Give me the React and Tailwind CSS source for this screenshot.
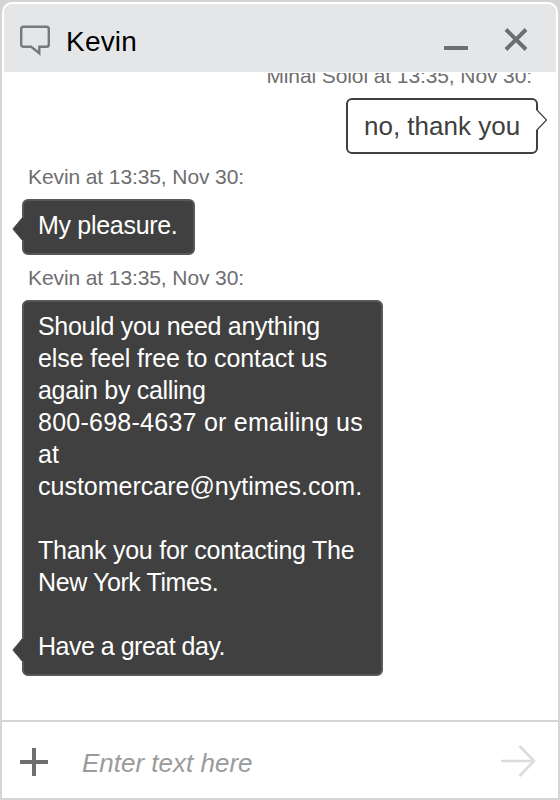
import { useState } from "react";

const messages = [
  {
    id: 1,
    from: "me",
    name: "Mihai Soloi",
    lines: [{ text: "no, thank you", tracking: "" }],
  },
  {
    id: 2,
    from: "agent",
    name: "Kevin",
    lines: [{ text: "My pleasure.", tracking: "tracking-[-0.3px]" }],
  },
  {
    id: 3,
    from: "agent",
    name: "Kevin",
    lines: [
      { text: "Should you need anything", tracking: "tracking-[-0.3px]" },
      { text: "else feel free to contact us", tracking: "tracking-[-0.1px]" },
      { text: "again by calling", tracking: "tracking-[-0.3px]" },
      { text: "800-698-4637 or emailing us", tracking: "tracking-[0.25px]" },
      { text: "at", tracking: "" },
      { text: "customercare@nytimes.com.", tracking: "tracking-[0px]" },
      { text: "", tracking: "" },
      { text: "Thank you for contacting The", tracking: "tracking-[-0.25px]" },
      { text: "New York Times.", tracking: "tracking-[-0.4px]" },
      { text: "", tracking: "" },
      { text: "Have a great day.", tracking: "tracking-[-0.5px]" },
    ],
  },
];

function Message({ message }) {
  const mine = message.from === "me";

  return (
    <div className={`flex flex-col ${mine ? "items-end pr-5" : "items-start pl-5"}`}>
      <div
        className={`h-[45px] whitespace-nowrap text-[21px] leading-[45px] tracking-[-0.1px] text-[#6e6e70] ${mine ? "pr-1.5" : "pl-1.5"}`}
      >
        {message.name} at 13:35, Nov 30:
      </div>
      <div
        className={`relative rounded-md border-2 leading-8 ${
          mine
            ? "border-[#404040] bg-white px-4 py-2.5 text-[26px] text-[#404040]"
            : "border-[#585858] bg-[#404040] px-3.5 pb-3 pt-2 text-[25px] text-white"
        } ${message.id === 3 ? "w-[361px]" : message.id === 2 ? "w-[173px]" : "w-48"}`}
      >
        {message.lines.map((line, i) => (
          <div key={i} className={`h-8 whitespace-nowrap ${line.tracking}`}>
            {line.text}
          </div>
        ))}
        {mine ? (
          <svg className="absolute -right-[12px] bottom-[20px]" width="14" height="24" viewBox="0 0 14 24">
            <path d="M1 2H4L13 12L4 22H1Z" fill="#fff" />
            <path d="M2.5 1.5L12.5 12L2.5 22.5" fill="none" stroke="#404040" strokeWidth="1.2" />
          </svg>
        ) : (
          <svg className="absolute -left-[12px] bottom-[13px]" width="12" height="22" viewBox="0 0 12 22">
            <path d="M12 0H10L0.5 11L10 22H12Z" fill="#404040" />
            <path d="M10 0L1 11L10 22" fill="none" stroke="#585858" strokeWidth="1" />
          </svg>
        )}
      </div>
    </div>
  );
}

export default function App() {
  const [text, setText] = useState("");

  return (
    <div className="h-[800px] w-[560px] bg-[#d4d4d4] font-['Liberation_Sans',Arial,sans-serif]">
      <div className="flex h-full flex-col overflow-hidden rounded-t-xl border-2 border-[#d4d4d4] bg-white">
        <header className="mx-0.5 mt-0.5 flex h-[68px] shrink-0 items-center rounded-t-lg bg-[#e5e6e8] pl-4 pr-7">
          <svg width="30" height="32" viewBox="0 0 30 32" fill="none" stroke="#77787a" strokeWidth="2.4" className="mt-1.5">
            <path d="M3.5 1.7H26.5Q28.8 1.7 28.8 4V19.5Q28.8 21.8 26.5 21.8H19.3V28.3L11.2 21.8H3.5Q1.2 21.8 1.2 19.5V4Q1.2 1.7 3.5 1.7Z" />
          </svg>
          <h1 className="ml-4 mt-2 text-[28px] leading-8 tracking-[0.2px] text-black">Kevin</h1>
          <div className="ml-auto flex items-center gap-9">
            <button type="button" aria-label="Minimize">
              <svg width="24" height="24" viewBox="0 0 24 24" className="mt-0.5">
                <path d="M0 21H24" stroke="#6d6e70" strokeWidth="4" />
              </svg>
            </button>
            <button type="button" aria-label="Close">
              <svg width="24" height="24" viewBox="0 0 24 24" className="mt-0.5">
                <path d="M2 2.5L22 22.5M22 2.5L2 22.5" stroke="#6d6e70" strokeWidth="4" />
              </svg>
            </button>
          </div>
        </header>

        <main className="mt-px min-h-0 flex-1 overflow-hidden">
          <div className="-mt-5">
            {messages.map((m) => (
              <Message key={m.id} message={m} />
            ))}
          </div>
        </main>

        <footer className="flex h-[78px] shrink-0 items-center border-t-2 border-[#d4d4d4] pl-[18px] pr-[22px]">
          <button type="button" aria-label="Attach">
            <svg width="28" height="28" viewBox="0 0 28 28" className="mt-1">
              <path d="M14 0V28M0 14H28" stroke="#6d6e70" strokeWidth="4" />
            </svg>
          </button>
          <input
            type="text"
            value={text}
            onChange={(e) => setText(e.target.value)}
            placeholder="Enter text here"
            className="ml-[34px] mt-1.5 min-w-0 flex-1 text-[26px] italic leading-8 text-[#404040] outline-none placeholder:text-[#9b9b9b]"
          />
          <button type="button" aria-label="Send">
            <svg width="36" height="32" viewBox="0 0 36 32" fill="none" stroke="#dcdcdc" strokeWidth="2.6" className="mt-0.5">
              <path d="M1 16H34M19.5 1L34 16L19.5 31" />
            </svg>
          </button>
        </footer>
      </div>
    </div>
  );
}
